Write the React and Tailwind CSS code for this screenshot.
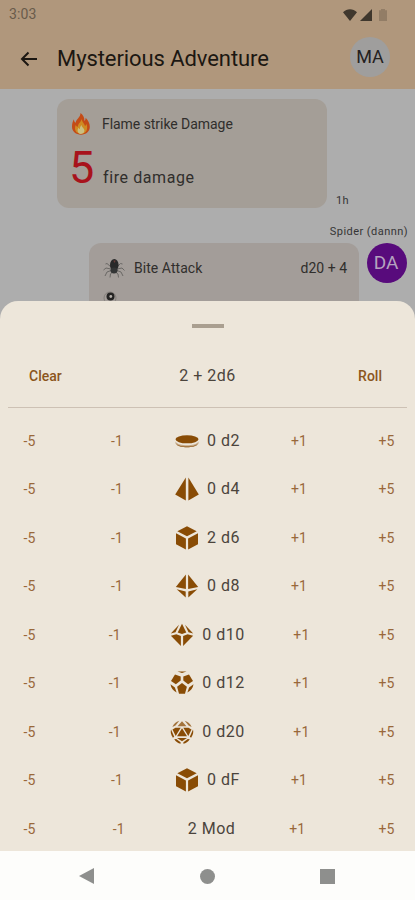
import { Fragment } from "react";

const DICE = [
    { name: "d2", count: 0, icon: "coin" },
    { name: "d4", count: 0, icon: "d4" },
    { name: "d6", count: 2, icon: "cube" },
    { name: "d8", count: 0, icon: "d8" },
    { name: "d10", count: 0, icon: "d10" },
    { name: "d12", count: 0, icon: "d12" },
    { name: "d20", count: 0, icon: "d20" },
    { name: "dF", count: 0, icon: "cube" },
    { name: "Mod", count: 2, icon: null },
];

const SHAPES = {
    coin: (
        <Fragment>
            <ellipse cx="12" cy="10.300" rx="11.500" ry="4" />
            <path d="M.5 12.500C2 15.300 7 16.300 12 16.300s10-1 11.500-3.800v2C22 17.300 17 18.300 12 18.300S2 17.300.5 14.500z" opacity=".4" />
            <path d="M1.500 15.300c2 1.800 6 2.300 10.500 2.300s8.500-.5 10.500-2.300c-1 2-6 3-10.500 3s-9.500-1-10.500-3z" />
        </Fragment>
    ),
    d4: (
        <Fragment>
            <path d="M10.800.4V23.600L.2 17.500z" />
            <path d="M13.400.4V23.600l10.400-6.100z" />
        </Fragment>
    ),
    cube: (
        <Fragment>
            <path d="M12 .3 21.700 5.300 12 10.300 2.300 5.300z" />
            <path d="M1 7.300l9.900 5.200v11L1 18.300z" />
            <path d="M23 7.300l-9.900 5.200v11l9.900-5.200z" />
        </Fragment>
    ),
    d8: (
        <Fragment>
            <path d="M10.900.4V14.900L.8 12.900z" />
            <path d="M13.100.4V14.900L23.200 12.900z" />
            <path d="M1.700 15.200l9 2.300v6z" />
            <path d="M22.300 15.200l-9 2.300v6z" />
        </Fragment>
    ),
    d10: (
        <Fragment>
            <path d="M12 .8 16.300 9.600 12 11 7.700 9.600z" />
            <path d="M9 1.700 5.500 9.200.8 10.500z" />
            <path d="M15 1.700l3.500 7.500 4.700 1.300z" />
            <path d="M.9 12.700l5.500-1.500 4.500 1.900v10z" />
            <path d="M23.100 12.700l-5.500-1.500-4.500 1.900v10z" />
        </Fragment>
    ),
    d12: (
        <Fragment>
            <path d="M7.500.6h9L12 2z" />
            <path d="M5 3.500l5.700 1.900v4.100l-4.800 3.800L1 10z" />
            <path d="M19 3.500l-5.700 1.900v4.100l4.800 3.800L23 10z" />
            <path d="M12 12l4.900 3.700-1.900 7H9l-1.900-7z" />
            <path d="M.5 13.200l4.400 3.400 1.700 5C3.400 19.700 1 17 .5 13.200z" />
            <path d="M23.500 13.200l-4.400 3.400-1.700 5c3.200-1.900 5.600-4.600 6.100-8.400z" />
        </Fragment>
    ),
    d20: (
        <Fragment>
            <path d="M12 1.200 16.500 6.200H7.500z" opacity=".75" />
            <path d="M12 8.300 17 16.300H7z" />
            <path d="M5.500 7.700h5.200L5.700 15.900 2.500 9.400z" />
            <path d="M18.500 7.700h-5.200l5 8.200 3.200-6.500z" />
            <path d="M7 18h10l-5 3.200z" />
            <path d="M9.300.8 5.500 5.600 2.300 7C3.800 3.800 6 1.700 9.300.8z" opacity=".75" />
            <path d="M14.700.8l3.800 4.800L21.700 7C20.200 3.800 18 1.700 14.700.8z" opacity=".75" />
            <path d="M1 9.600l3.200 7.200-1.300.9C.9 15 .3 12 1 9.600z" />
            <path d="M23 9.600l-3.200 7.200 1.300.9c2-2.700 2.600-5.700 1.900-8.100z" />
            <path d="M4.200 19.300l2-.2 4.400 3.100v1.500c-2.500-.4-4.700-1.600-6.400-4.400z" />
            <path d="M19.800 19.300l-2-.2-4.400 3.100v1.500c2.500-.4 4.700-1.600 6.400-4.400z" />
        </Fragment>
    ),
};

function DieIcon({ type }) {
    return (
        <svg viewBox="0 0 24 24" className="h-6 w-6 shrink-0 fill-[#894c05]">
            {SHAPES[type]}
        </svg>
    );
}

function FireIcon() {
    return (
        <svg viewBox="0 0 20 22" className="h-[22px] w-5 shrink-0">
            <path
                d="M9.500 0c2.500 2 4.200 4.500 3.800 8 1-.7 1.400-1.900 1.300-3.200 2.600 2.300 4.200 5.800 4.200 9 0 4.700-3.800 7.900-8.800 7.900S1 18.500 1 13.800c0-2.900.8-5.700 1.900-7.500.1 1.700.7 2.800 1.800 3.500C5 6 9.500 4.500 9.500 0z"
                fill="#c44b16"
            />
            <path
                d="M10.500 6c.6 3 2.900 4.500 3.500 7 .9-.6 1.300-1.300 1.400-2.300 1.600 3.800 1.100 10-5.400 10-5.800 0-7-5-5.300-8.700.5 1 1.200 1.600 2.100 1.900C6.700 10.500 10 9.500 10.500 6z"
                fill="#cf8a22"
            />
            <path
                d="M10.400 12c.2 2.200 3 3.300 3 5.600 0 2-1.400 3.300-3.400 3.300s-3.400-1.300-3.400-3.200c0-1.300.5-2.300 1-2.900.3.900.7 1.300 1.200 1.500 0-1.700.7-3.200 1.600-4.300z"
                fill="#c9bf83"
            />
        </svg>
    );
}

function SpiderIcon() {
    return (
        <svg viewBox="0 0 22 20" className="h-5 w-[22px] shrink-0">
            <path
                d="M8 9 4 5.500 2.500 6M8 11l-5-1-2.500 2M8 12.500 4 14l-2 4M9.500 14l-2 2-.5 3.500M14 9l3.500-3.500 2 .5M14 11l5-1 2.500 2.500M14 12.500l4 1.500 2 4M12.500 14l2.500 2 .5 3.500"
                fill="none"
                stroke="#6a6865"
                strokeWidth="1"
            />
            <ellipse cx="11.300" cy="7" rx="4.300" ry="6" fill="#282929" />
            <ellipse cx="11" cy="12.500" rx="3.500" ry="3" fill="#333535" />
            <path d="M10.500 2.500h2l-.5 2h-1z" fill="#683c38" />
        </svg>
    );
}

function StatusBar() {
    return (
        <div className="flex h-7 items-center justify-between pl-[9px] pr-7">
            <span className="text-[14px] leading-none tracking-[0.1px] text-[#695b4b]">3:03</span>
            <div className="flex items-center pt-px">
                <svg viewBox="0 0 14 12" className="mr-[3px] h-3 w-[14px] fill-[#3f372d]">
                    <path d="M0 3.200C4-.8 10-.8 14 3.200L7 12z" />
                </svg>
                <svg viewBox="0 0 12 12" className="mr-[7px] h-3 w-3 fill-[#3f372d]">
                    <path d="M12 0v12H0z" />
                </svg>
                <svg viewBox="0 0 8 12" className="h-3 w-2 fill-[#927d66]">
                    <path d="M0 1.200h2V0h4v1.200h2V12H0z" />
                </svg>
            </div>
        </div>
    );
}

function AppBar() {
    return (
        <div className="flex h-[61px] items-center pl-5 pr-[25px]">
            <svg viewBox="0 0 18 16" className="h-4 w-[18px] fill-none stroke-[#1c1712] stroke-2">
                <path d="M17 8H2.500M8.500 1.500 2 8l6.500 6.500" />
            </svg>
            <h1 className="ml-[19px] text-[22px] leading-none tracking-[-0.08px] text-[#1c1712]">
                Mysterious Adventure
            </h1>
            <div className="mb-1 ml-auto flex h-10 w-10 items-center justify-center rounded-full bg-[#9f9e9d] text-[18px] text-[#24211f]">
                MA
            </div>
        </div>
    );
}

function Adventure() {
    return (
        <div className="h-[312px] overflow-hidden bg-[#adadad]">
            <div className="h-[89px] bg-[#b0977c]">
                <StatusBar />
                <AppBar />
            </div>

            {/* Flame strike */}
            <div className="ml-[57px] mt-[10px] flex items-end">
                <div className="h-[109px] w-[270px] rounded-xl bg-[#a49e97] pl-[14px] pt-[14px]">
                    <div className="flex items-center">
                        <FireIcon />
                        <span className="ml-[11px] text-[14px] leading-none tracking-[-0.05px] text-[#302e2c]">
                            Flame strike Damage
                        </span>
                    </div>
                    <div className="mt-[10px] flex items-baseline">
                        <span className="-ml-[2px] w-[34px] text-[45px] leading-none text-[#a8131c]">5</span>
                        <span className="text-[16px] leading-none tracking-[0.6px] text-[#302e2c]">fire damage</span>
                    </div>
                </div>
                <span className="ml-[9px] text-[11px] leading-[14px] tracking-[0.4px] text-[#353535]">1h</span>
            </div>

            {/* Spider bite */}
            <div className="mr-[7px] mt-[17px] text-right text-[11px] leading-[14px] tracking-[0.45px] text-[#353535]">
                Spider (dannn)
            </div>
            <div className="ml-[89px] mt-[4px] flex">
                <div className="h-[109px] w-[270px] rounded-xl bg-[#a39d99] pl-[14px] pr-[12px] pt-[15px]">
                    <div className="flex items-center">
                        <SpiderIcon />
                        <span className="ml-[9px] text-[14px] leading-none tracking-[0.05px] text-[#302e2c]">Bite Attack</span>
                        <span className="ml-auto text-[14px] leading-none tracking-[0px] text-[#302e2c]">d20 + 4</span>
                    </div>
                    <svg viewBox="0 0 14 14" className="mt-[13px] h-[14px] w-[14px]">
                        <circle cx="7" cy="7" r="6" fill="none" stroke="#85807b" />
                        <circle cx="7.500" cy="5.500" r="4" fill="#252423" />
                        <circle cx="7.800" cy="5.500" r="1.400" fill="#b5b0ab" />
                    </svg>
                </div>
                <div className="ml-2 flex h-10 w-10 items-center justify-center rounded-full bg-[#580b7c] pr-[2px] text-[19px] text-[#b5a2bf]">
                    DA
                </div>
            </div>
        </div>
    );
}

function StepButton({ label }) {
    return (
        <button className="w-[58px] pl-px text-center text-[14px] leading-none tracking-[0.1px] text-[#99683a]">
            {label}
        </button>
    );
}

function DiceRow({ die }) {
    return (
        <div className="flex h-[48.5px] shrink-0 items-center justify-between">
            <StepButton label="-5" />
            <StepButton label="-1" />
            <div className={`flex min-w-[58px] items-center justify-center gap-2 ${die.icon ? "" : "pl-2"}`}>
                {die.icon && <DieIcon type={die.icon} />}
                <span className="text-[16px] leading-none tracking-[0.5px] text-[#4b443c]">
                    {die.count} {die.name}
                </span>
            </div>
            <StepButton label="+1" />
            <StepButton label="+5" />
        </div>
    );
}

function DiceSheet() {
    return (
        <div className="absolute inset-x-0 bottom-[49px] top-[301px] flex flex-col overflow-hidden rounded-t-[18px] bg-[#ede6da]">
            <div className="mx-auto mt-[22.500px] h-1 w-8 shrink-0 bg-[#aa9f90]" />
            <div className="mt-[15px] flex h-[64px] shrink-0 items-center justify-between pl-[29px] pr-[33px] pt-[3px] text-[14px] font-medium text-[#8b551c]">
                <button className="w-[60px] text-left">Clear</button>
                <span className="text-[16px] font-normal tracking-[0.5px] text-[#4b443c]">2 + 2d6</span>
                <button className="w-[56px] text-right">Roll</button>
            </div>
            <div className="mx-2 h-px shrink-0 bg-[#cdc1b4]" />
            <div className="mt-[9px] flex flex-col">
                {DICE.map((die) => (
                    <DiceRow key={die.name} die={die} />
                ))}
            </div>
        </div>
    );
}

function NavBar() {
    return (
        <div className="mt-auto flex h-[49px] items-center justify-between bg-[#fdfdfb] pl-[79px] pr-[80px] pt-px">
            <svg viewBox="0 0 15 16" className="h-4 w-[15px] fill-[#8e8f8d]">
                <path d="M15 0v16L0 8z" />
            </svg>
            <div className="h-[15px] w-[15px] rounded-full bg-[#8e8f8d]" />
            <div className="h-[15px] w-[15px] bg-[#8e8f8d]" />
        </div>
    );
}

function App() {
    return (
        <div className="relative flex h-[900px] w-[415px] flex-col overflow-hidden bg-[#adadad] font-['Roboto',sans-serif]">
            <Adventure />
            <DiceSheet />
            <NavBar />
        </div>
    );
}

export default App;
